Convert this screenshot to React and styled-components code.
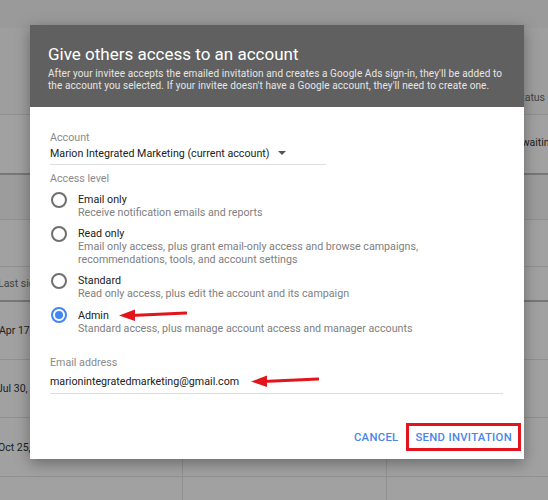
import React from 'react';
import styled, { createGlobalStyle } from 'styled-components';

const GlobalStyle = createGlobalStyle`
  body {
    margin: 0;
    font-family: Roboto, 'Noto Sans', Arial, sans-serif;
    overflow: hidden;
  }
`;

// page behind the dialog
const Page = styled.div`
  position: relative;
  width: 548px;
  height: 500px;
  overflow: hidden;
  background: #ffffff;
`;

const TopBar = styled.div`
  height: 28px;
  background: #f4f4f4;
`;

const Row = styled.div`
  display: grid;
  grid-template-columns: 182px 204px 124px 38px;
  height: ${({h}) => h}px;
  border-bottom: ${({thick}) => (thick ? '2px solid #bdbdbd' : '1px solid #e4e4e4')};
  box-sizing: border-box;
  background: ${({shade}) => shade || '#ffffff'};
`;

const Cell = styled.div`
  display: flex;
  align-items: ${({align}) => align || 'center'};
  padding-bottom: ${({pb}) => pb || 0}px;
  font-size: 10.5px;
  color: ${({muted}) => (muted ? '#6b6b6b' : '#333333')};
  white-space: nowrap;
  overflow: hidden;
  text-indent: ${({indent}) => indent || 0}px;
  border-left: ${({line}) => (line ? '1px solid #e4e4e4' : 'none')};
`;

const Overlay = styled.div`
  position: absolute;
  inset: 0;
  background: rgba(0, 0, 0, 0.37);
`;

const Dialog = styled.div`
  position: absolute;
  top: 25px;
  left: 30px;
  width: 494px;
  height: 434px;
  display: flex;
  flex-direction: column;
  background: #ffffff;
  box-shadow: 0 4px 14px rgba(0, 0, 0, 0.35);
`;

const Header = styled.div`
  background: #606060;
  padding: 19px 18px 15px 18px;
  color: #ffffff;
`;

const Title = styled.h2`
  margin: 0 0 4px 0;
  font-size: 17px;
  line-height: 20px;
  font-weight: 400;
`;

const Intro = styled.p`
  margin: 0;
  font-size: 10px;
  line-height: 12px;
  letter-spacing: 0.1px;
  color: #e6e6e6;
`;

const Body = styled.div`
  flex: 1;
  display: flex;
  flex-direction: column;
  padding: 24px 20px 0 20px;
`;

const Label = styled.div`
  font-size: 10.7px;
  line-height: 14px;
  color: #8a8a8a;
`;

const Field = styled.div`
  display: flex;
  align-items: center;
  width: ${({w}) => w}px;
  height: 16px;
  margin-top: ${({mt}) => mt || 0}px;
  padding-bottom: ${({pb}) => pb || 3}px;
  border-bottom: 1px solid #dedede;
  font-size: 10.7px;
  color: #212121;
  margin-bottom: ${({mb}) => mb || 0}px;
`;

const Caret = styled.span`
  width: 0;
  height: 0;
  margin-left: 8px;
  border-left: 4px solid transparent;
  border-right: 4px solid transparent;
  border-top: 4px solid #555555;
`;

const Options = styled.div`
  display: flex;
  flex-direction: column;
  gap: 8px;
  margin-top: 7px;
`;

const Option = styled.label`
  display: flex;
  align-items: flex-start;
  gap: 11px;
`;

const Radio = styled.span`
  flex: none;
  width: 16px;
  height: 16px;
  margin-left: 1px;
  margin-top: -1px;
  box-sizing: border-box;
  border-radius: 50%;
  border: 2px solid ${({checked}) => (checked ? '#4285f4' : '#6f6f6f')};
  display: flex;
  align-items: center;
  justify-content: center;

  &::after {
    content: '';
    width: 8px;
    height: 8px;
    border-radius: 50%;
    background: ${({checked}) => (checked ? '#4285f4' : 'transparent')};
  }
`;

const OptionText = styled.div`
  display: flex;
  flex-direction: column;
`;

const OptionTitle = styled.div`
  display: flex;
  align-items: center;
  font-size: 10.7px;
  line-height: 13px;
  color: #212121;
`;

const OptionDesc = styled.div`
  font-size: 10.7px;
  line-height: 13px;
  color: #808080;
  max-width: 400px;
`;

const Arrow = styled.svg`
  flex: none;
  margin-left: ${({gap}) => gap}px;
`;

const EmailBlock = styled.div`
  margin-top: 21px;
`;

const Actions = styled.div`
  margin-top: auto;
  margin-right: -17px;
  margin-bottom: 8px;
  display: flex;
  justify-content: flex-end;
  align-items: center;
`;

const TextButton = styled.button`
  background: none;
  border: ${({boxed}) => (boxed ? '3px solid #e3141c' : 'none')};
  padding: ${({boxed}) => (boxed ? '0 6px' : '0 8px 0 0')};
  height: 28px;
  font-family: inherit;
  font-size: 11.3px;
  font-weight: 500;
  letter-spacing: 0.3px;
  color: #4a86e8;
  cursor: pointer;
`;

const RedArrow = ({gap}) => (
  <Arrow gap={gap} width="68" height="14" viewBox="0 0 68 14">
    <line x1="12" y1="7.5" x2="67" y2="5" stroke="#e3141c" strokeWidth="3" strokeLinecap="round" />
    <polygon points="0,7.5 16,1.5 16,13" fill="#e3141c" />
  </Arrow>
);

const options = [
  {title: 'Email only', desc: 'Receive notification emails and reports'},
  {
    title: 'Read only',
    desc: 'Email only access, plus grant email-only access and browse campaigns, recommendations, tools, and account settings',
  },
  {title: 'Standard', desc: 'Read only access, plus edit the account and its campaign'},
  {title: 'Admin', desc: 'Standard access, plus manage account access and manager accounts', checked: true},
];

const App = () => {
  return (
    <Page>
      <GlobalStyle />
      <TopBar />
      <Row h={87} shade="#fbfbfb">
        <Cell />
        <Cell />
        <Cell />
        <Cell align="flex-end" pb={10} muted indent={5}>Status</Cell>
      </Row>
      <Row h={60} thick>
        <Cell />
        <Cell />
        <Cell />
        <Cell pb={4} indent={5}>Awaiting</Cell>
      </Row>
      <Row h={45} shade="#f7f7f7">
        <Cell />
        <Cell />
        <Cell />
        <Cell />
      </Row>
      <Row h={47}>
        <Cell />
        <Cell />
        <Cell />
        <Cell />
      </Row>
      <Row h={35} thick>
        <Cell muted indent={-2}>Last sign-in</Cell>
        <Cell />
        <Cell />
        <Cell />
      </Row>
      <Row h={58}>
        <Cell indent={-1}>Apr 17, 2019</Cell>
        <Cell line />
        <Cell line />
        <Cell />
      </Row>
      <Row h={58}>
        <Cell indent={-3}>Jul 30, 2019</Cell>
        <Cell line />
        <Cell line />
        <Cell />
      </Row>
      <Row h={59}>
        <Cell indent={-2}>Oct 25, 2019</Cell>
        <Cell line />
        <Cell line />
        <Cell />
      </Row>
      <Row h={30}>
        <Cell />
        <Cell line />
        <Cell line />
        <Cell />
      </Row>
      <Overlay />

      <Dialog>
        <Header>
          <Title>Give others access to an account</Title>
          <Intro>
            After your invitee accepts the emailed invitation and creates a Google Ads sign-in, they'll be added to the
            account you selected. If your invitee doesn't have a Google account, they'll need to create one.
          </Intro>
        </Header>
        <Body>
          <Label>Account</Label>
          <Field w={276} mb={7}>
            Marion Integrated Marketing (current account)
            <Caret />
          </Field>
          <Label>Access level</Label>
          <Options>
            {options.map((o) => (
              <Option key={o.title}>
                <Radio checked={o.checked} />
                <OptionText>
                  <OptionTitle>
                    {o.title}
                    {o.checked && <RedArrow gap={10} />}
                  </OptionTitle>
                  <OptionDesc>{o.desc}</OptionDesc>
                </OptionText>
              </Option>
            ))}
          </Options>
          <EmailBlock>
            <Label>Email address</Label>
            <Field w={453} mt={3} pb={4}>
              marionintegratedmarketing@gmail.com
              <RedArrow gap={12} />
            </Field>
          </EmailBlock>
          <Actions>
            <TextButton>CANCEL</TextButton>
            <TextButton boxed>SEND INVITATION</TextButton>
          </Actions>
        </Body>
      </Dialog>
    </Page>
  );
};

export default App;
